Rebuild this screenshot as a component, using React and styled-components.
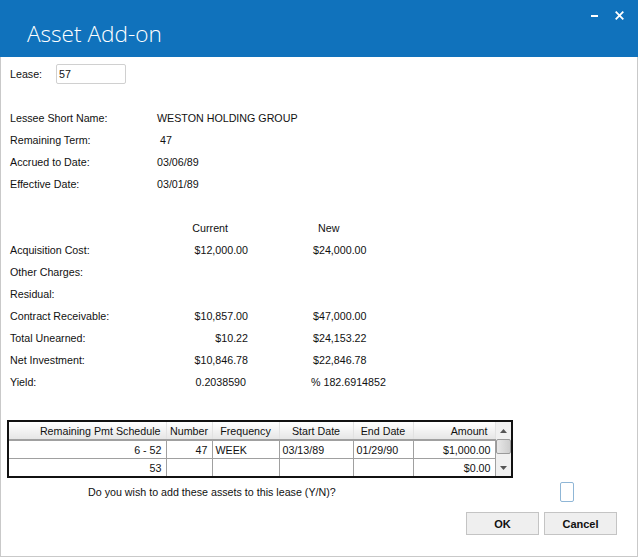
import React from 'react';
import styled, { createGlobalStyle } from 'styled-components';

const GlobalStyle = createGlobalStyle`
  html, body { margin: 0; padding: 0; background: #fff; }
  body { font-family: "Liberation Sans", Arial, sans-serif; font-size: 10.7px; color: #111; }
`;

const Window = styled.div`
  box-sizing: border-box;
  width: 638px;
  height: 557px;
  display: flex;
  flex-direction: column;
  background: #fff;
  border: 1px solid #c9c9c9;
  border-top: 0;
`;

const TitleBar = styled.header`
  height: 57px;
  margin: 0 -1px;
  padding: 0 14px 0 27px;
  display: flex;
  align-items: center;
  justify-content: space-between;
  background: #1072bc;
  color: #fff;
`;

const Title = styled.h1`
  margin: 9px 0 0;
  font-family: "Open Sans", sans-serif;
  font-weight: 300;
  font-size: 22.6px;
`;

const WindowButtons = styled.div`
  display: flex;
  gap: 17px;
  align-items: center;
  margin-top: -26px;
`;

const Body = styled.main`
  flex: 1;
  padding: 7px 0 0 9px;
  display: flex;
  flex-direction: column;
`;

const LeaseRow = styled.div`
  display: flex;
  align-items: center;
  height: 20px;
`;

const LeaseLabel = styled.label`
  width: 46px;
`;

const LeaseInput = styled.input`
  box-sizing: border-box;
  width: 70px;
  height: 20px;
  padding: 0 2px;
  border: 1px solid #d0d0d0;
  border-radius: 2px;
  font: inherit;
  color: #111;
  outline: none;
`;

const InfoGrid = styled.div`
  margin-top: 23px;
  display: grid;
  grid-template-columns: 147px 1fr;
  grid-auto-rows: 22px;
  align-items: center;
`;

const Value = styled.span`
  padding-left: ${(p) => p.$indent || 0}px;
`;

const FinanceGrid = styled.div`
  margin-top: 22px;
  display: grid;
  grid-template-columns: 139px 99px 65px 1fr;
  grid-auto-rows: 22px;
  align-items: center;
`;

const ColumnHead = styled.span`
  text-align: right;
  padding-right: ${(p) => p.$pad}px;
`;

const NewHead = styled.span`
  grid-column: 4;
  padding-left: 5px;
`;

const Amount = styled.span`
  text-align: right;
  padding-right: ${(p) => p.$pad || 0}px;
`;

const NewAmount = styled.span`
  grid-column: 4;
  margin-left: ${(p) => p.$shift || 0}px;
  white-space: nowrap;
`;

const GridFrame = styled.div`
  box-sizing: border-box;
  width: 506px;
  height: 58px;
  margin: 27px 0 0 -3px;
  display: flex;
  border: 2px solid #111;
`;

const Table = styled.table`
  width: 486px;
  height: 54px;
  table-layout: fixed;
  border-collapse: collapse;
`;

const HeadCell = styled.th`
  box-sizing: border-box;
  height: 18px;
  padding: 1px ${(p) => p.$pad ?? 3}px 0 3px;
  font-weight: 400;
  text-align: ${(p) => p.$align || 'center'};
  background: linear-gradient(#ffffff, #f1f1f1 55%, #e6e6e6);
  border-right: 1px solid #e2e2e2;
  border-bottom: 2px solid #a0a0a0;
  white-space: nowrap;
  overflow: hidden;
`;

const Cell = styled.td`
  box-sizing: border-box;
  padding: 1px 4px 0 3px;
  height: 18px;
  text-align: ${(p) => p.$align || 'left'};
  border-right: 1px solid #a0a0a0;
  border-bottom: 1px solid #a0a0a0;
  white-space: nowrap;
  tr:last-child > & { border-bottom: 0; }
`;

const ScrollBar = styled.div`
  flex: 1;
  display: flex;
  flex-direction: column;
  align-items: center;
  background: #f0f0f0;
`;

const ScrollArrow = styled.div`
  height: 17px;
  display: flex;
  align-items: center;
  justify-content: center;
`;

const ScrollThumb = styled.div`
  box-sizing: border-box;
  width: 100%;
  height: 15px;
  flex: none;
  background: linear-gradient(90deg, #e8e8e8, #cdcdcd);
  border: 1px solid #9a9a9a;
  border-radius: 2px;
`;

const Spacer = styled.div`
  flex: 1;
`;

const QuestionRow = styled.div`
  display: flex;
  align-items: center;
  height: 20px;
  margin-top: 4px;
  padding-left: 78px;
`;

const Question = styled.span`
  width: 472px;
`;

const AnswerInput = styled.input`
  box-sizing: border-box;
  width: 14px;
  height: 20px;
  padding: 0;
  border: 1px solid #8fb6d6;
  border-radius: 2px;
  outline: none;
`;

const Actions = styled.div`
  display: flex;
  justify-content: flex-end;
  gap: 5px;
  margin-top: 10px;
  padding-right: 20px;
`;

const Button = styled.button`
  box-sizing: border-box;
  width: 73px;
  height: 23px;
  padding: 0;
  background: #efefef;
  border: 1px solid #c4c4c4;
  font-family: inherit;
  font-size: 11px;
  font-weight: 700;
  color: #111;
`;

const info = [
  ['Lessee Short Name:', 'WESTON HOLDING GROUP', 0],
  ['Remaining Term:', '47', 3],
  ['Accrued to Date:', '03/06/89', 0],
  ['Effective Date:', '03/01/89', 0],
];

const finance = [
  ['Acquisition Cost:', '$12,000.00', '$24,000.00'],
  ['Other Charges:', '', ''],
  ['Residual:', '', ''],
  ['Contract Receivable:', '$10,857.00', '$47,000.00'],
  ['Total Unearned:', '$10.22', '$24,153.22'],
  ['Net Investment:', '$10,846.78', '$22,846.78'],
];

const columns = [
  { label: 'Remaining Pmt Schedule', width: 157, align: 'right', pad: 5 },
  { label: 'Number', width: 46 },
  { label: 'Frequency', width: 67 },
  { label: 'Start Date', width: 74 },
  { label: 'End Date', width: 60 },
  { label: 'Amount', width: 82, align: 'right', pad: 7 },
];

function Arrow({ up }) {
  return (
    <svg width="7" height="4" viewBox="0 0 7 4">
      <path d={up ? 'M3.5 0L7 4H0z' : 'M0 0h7L3.5 4z'} fill="#555" />
    </svg>
  );
}

export default function App() {
  return (
    <Window>
      <GlobalStyle />
      <TitleBar>
        <Title>Asset Add-on</Title>
        <WindowButtons>
          <svg width="7" height="2" viewBox="0 0 7 2">
            <rect width="7" height="2" fill="#fff" />
          </svg>
          <svg width="9" height="9" viewBox="0 0 9 9">
            <path d="M0.7 0.7L8.3 8.3M8.3 0.7L0.7 8.3" stroke="#fff" strokeWidth="1.8" />
          </svg>
        </WindowButtons>
      </TitleBar>

      <Body>
        <LeaseRow>
          <LeaseLabel>Lease:</LeaseLabel>
          <LeaseInput defaultValue="57" />
        </LeaseRow>

        <InfoGrid>
          {info.map(([label, value, indent]) => (
            <React.Fragment key={label}>
              <span>{label}</span>
              <Value $indent={indent}>{value}</Value>
            </React.Fragment>
          ))}
        </InfoGrid>

        <FinanceGrid>
          <span />
          <ColumnHead $pad={20}>Current</ColumnHead>
          <NewHead>New</NewHead>
          {finance.map(([label, current, next]) => (
            <React.Fragment key={label}>
              <span>{label}</span>
              <Amount>{current}</Amount>
              <NewAmount>{next}</NewAmount>
            </React.Fragment>
          ))}
          <span>Yield:</span>
          <Amount $pad={2}>0.2038590</Amount>
          <NewAmount $shift={-2}>% 182.6914852</NewAmount>
        </FinanceGrid>

        <GridFrame>
          <Table>
            <colgroup>
              {columns.map((c) => (
                <col key={c.label} style={{ width: c.width }} />
              ))}
            </colgroup>
            <thead>
              <tr>
                {columns.map((c) => (
                  <HeadCell key={c.label} $align={c.align} $pad={c.pad}>
                    {c.label}
                  </HeadCell>
                ))}
              </tr>
            </thead>
            <tbody>
              <tr>
                <Cell $align="right">6 -  52</Cell>
                <Cell $align="right">47</Cell>
                <Cell>WEEK</Cell>
                <Cell>03/13/89</Cell>
                <Cell>01/29/90</Cell>
                <Cell $align="right">$1,000.00</Cell>
              </tr>
              <tr>
                <Cell $align="right">53</Cell>
                <Cell />
                <Cell />
                <Cell />
                <Cell />
                <Cell $align="right">$0.00</Cell>
              </tr>
            </tbody>
          </Table>
          <ScrollBar>
            <ScrollArrow><Arrow up /></ScrollArrow>
            <ScrollThumb />
            <Spacer />
            <ScrollArrow><Arrow /></ScrollArrow>
          </ScrollBar>
        </GridFrame>

        <QuestionRow>
          <Question>Do you wish to add these assets to this lease (Y/N)?</Question>
          <AnswerInput />
        </QuestionRow>

        <Actions>
          <Button>OK</Button>
          <Button>Cancel</Button>
        </Actions>
      </Body>
    </Window>
  );
}
